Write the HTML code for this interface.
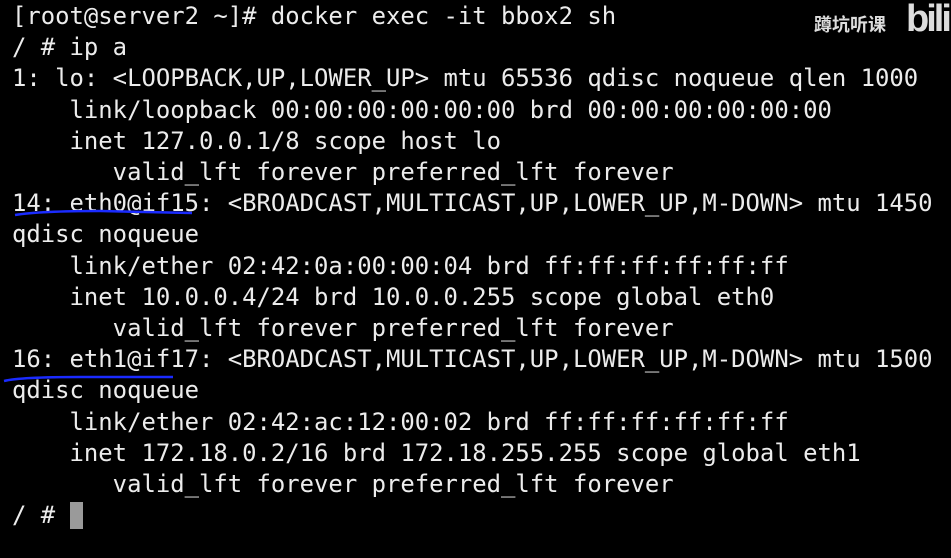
<!DOCTYPE html>
<html><head><meta charset="utf-8"><style>
html,body{margin:0;padding:0;background:#000;width:951px;height:558px;overflow:hidden}
pre{margin:0;position:absolute;left:12px;top:1px;font-family:"DejaVu Sans Mono","Liberation Mono",monospace;font-size:23.9px;line-height:31.2px;color:#ececec;letter-spacing:0}
.cur{display:inline-block;width:13px;height:27px;background:#9a9a9a;vertical-align:-6px}
.logo{position:absolute;left:814px;top:11px;color:#ddd;font-family:"Noto Sans CJK SC",sans-serif;font-size:18px;font-weight:bold}
.bili{position:absolute;left:906px;top:-2px;color:#ddd;font-family:"Liberation Sans",sans-serif;font-size:38px;font-weight:bold;letter-spacing:-3px}
</style></head><body>
<pre>[root@server2 ~]# docker exec -it bbox2 sh
/ # ip a
1: lo: &lt;LOOPBACK,UP,LOWER_UP&gt; mtu 65536 qdisc noqueue qlen 1000
    link/loopback 00:00:00:00:00:00 brd 00:00:00:00:00:00
    inet 127.0.0.1/8 scope host lo
       valid_lft forever preferred_lft forever
14: eth0@if15: &lt;BROADCAST,MULTICAST,UP,LOWER_UP,M-DOWN&gt; mtu 1450
qdisc noqueue
    link/ether 02:42:0a:00:00:04 brd ff:ff:ff:ff:ff:ff
    inet 10.0.0.4/24 brd 10.0.0.255 scope global eth0
       valid_lft forever preferred_lft forever
16: eth1@if17: &lt;BROADCAST,MULTICAST,UP,LOWER_UP,M-DOWN&gt; mtu 1500
qdisc noqueue
    link/ether 02:42:ac:12:00:02 brd ff:ff:ff:ff:ff:ff
    inet 172.18.0.2/16 brd 172.18.255.255 scope global eth1
       valid_lft forever preferred_lft forever
/ # <span class="cur"></span></pre>
<svg width="951" height="558" style="position:absolute;left:0;top:0">
<path d="M15 215 Q40 211 100 211 L192 213" stroke="#1a2bff" stroke-width="2.5" fill="none"/>
<path d="M4 381 Q20 377 80 377 L173 377" stroke="#1a2bff" stroke-width="2.5" fill="none"/>
</svg>
<div class="logo">蹲坑听课</div>
<div class="bili">bili</div>
</body></html>
